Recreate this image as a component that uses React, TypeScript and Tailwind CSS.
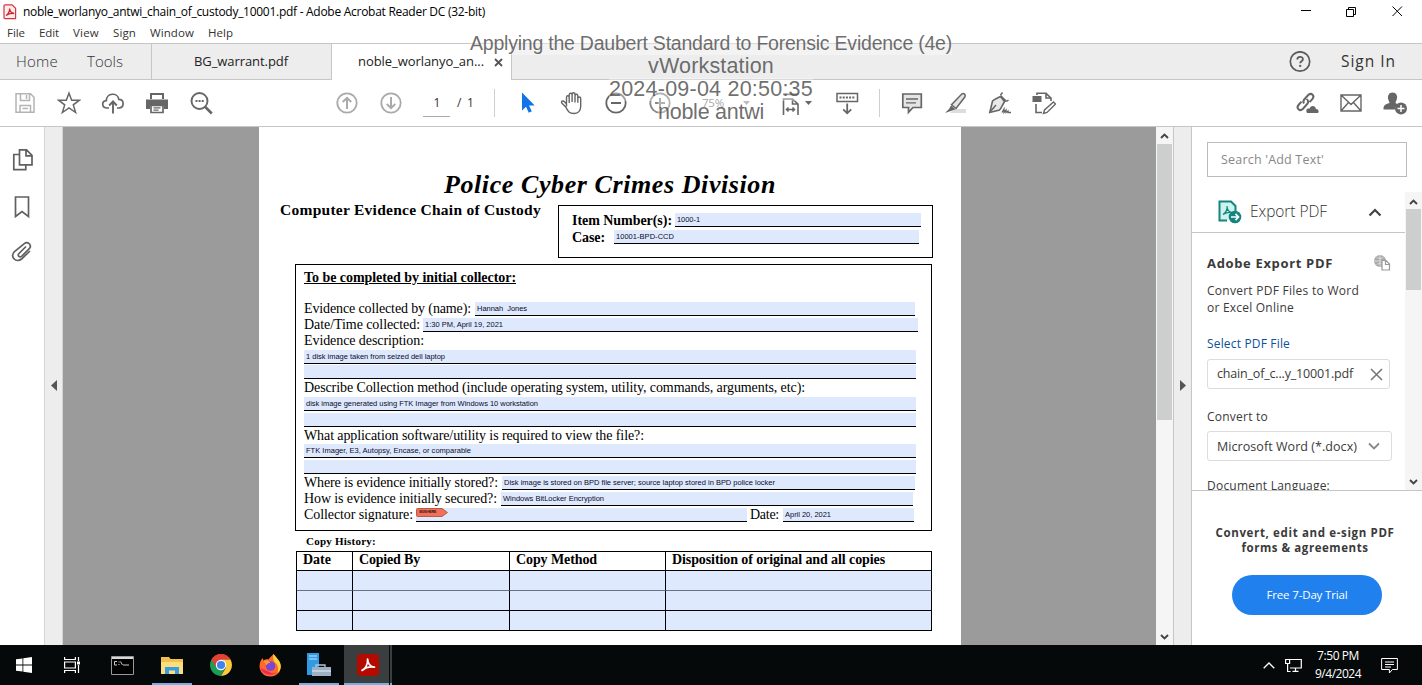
import { useLayoutEffect, useRef, type ReactNode } from "react";

const UI = "font-['Open_Sans','Noto_Sans',sans-serif]";
const SERIF = "font-['Liberation_Serif',serif]";
const SANS = "font-['Liberation_Sans',sans-serif]";

/** Single line of text whose tracking is adjusted so that it spans `w` pixels. */
function Fit({ w, className = "", children }: { w: number; className?: string; children: string }) {
  const ref = useRef<HTMLSpanElement>(null);
  useLayoutEffect(() => {
    const el = ref.current;
    if (!el) return;
    el.style.letterSpacing = "0px";
    const natural = el.getBoundingClientRect().width;
    el.style.letterSpacing = `${(w - natural) / children.length}px`;
  }, [w, children]);
  return (
    <span ref={ref} className={`inline-block shrink-0 whitespace-pre ${className}`}>
      {children}
    </span>
  );
}

function Icon({ children, size = 24, className = "text-[#666]" }: { children: ReactNode; size?: number; className?: string }) {
  return (
    <svg width={size} height={size} viewBox={`0 0 ${size} ${size}`} fill="none" stroke="currentColor" strokeWidth="1.8" className={`shrink-0 ${className}`}>
      {children}
    </svg>
  );
}

function Cell({ children, w = "w-11" }: { children: ReactNode; w?: string }) {
  return <div className={`flex h-full shrink-0 items-center justify-center ${w}`}>{children}</div>;
}

function TitleBar() {
  return (
    <div className={`flex h-6 shrink-0 items-center bg-white pl-[3px] text-[12px] text-black ${UI}`}>
      <svg width="14" height="16" viewBox="0 0 14 16" className="mr-[6px] shrink-0">
        <path d="M2 .8h7l3.6 3.4v10.400H2a1 1 0 0 1-1-1V1.800a1 1 0 0 1 1-1z" fill="#fdeceb" stroke="#d0383c" strokeWidth="1.200" />
        <path d="M3 11.500c2-1 4-4.500 3.600-7 .2 3 2.600 4.600 4.600 5C8.500 9 6 9.300 3 11.500z" fill="none" stroke="#c8262c" strokeWidth="1.300" />
      </svg>
      <Fit w={462}>noble_worlanyo_antwi_chain_of_custody_10001.pdf - Adobe Acrobat Reader DC (32-bit)</Fit>
      <svg width="110" height="20" viewBox="0 0 110 20" fill="none" stroke="#000" strokeWidth="1" className="mr-[14px] ml-auto shrink-0">
        <path d="M3 8.500h10" />
        <path d="M48.500 7.500h7v7h-7zM50.500 7.500v-2h7v7h-2" />
        <path d="M94.500 4.500l9.500 9.500M104 4.500l-9.500 9.500" />
      </svg>
    </div>
  );
}

function MenuBar() {
  return (
    <div className={`flex h-[19px] shrink-0 items-center gap-[14px] bg-white pb-[2px] pl-[7px] text-[11.500px] text-[#333] ${UI}`}>
      <Fit w={18}>File</Fit>
      <Fit w={20}>Edit</Fit>
      <Fit w={26}>View</Fit>
      <Fit w={23}>Sign</Fit>
      <Fit w={44}>Window</Fit>
      <Fit w={25}>Help</Fit>
    </div>
  );
}

function TabBar() {
  return (
    <div className={`flex h-[37px] shrink-0 border-y border-[#c6c6c6] bg-[#ededed] ${UI}`}>
      <div className="flex w-[152px] shrink-0 items-center border-r border-[#c6c6c6] pl-4 text-[15px] font-light text-[#333]">
        <Fit w={42}>Home</Fit>
        <Fit w={36} className="ml-[29px]">Tools</Fit>
      </div>
      <div className="flex w-[180px] shrink-0 items-center border-r border-[#c6c6c6] pl-[42px] text-[13px] text-[#222]">
        <Fit w={94}>BG_warrant.pdf</Fit>
      </div>
      <div className="-mt-px -mb-px flex w-[180px] shrink-0 items-center border-t border-r border-[#c6c6c6] bg-white pl-[26px] text-[13px] text-[#222]">
        <Fit w={126}>noble_worlanyo_an...</Fit>
        <svg width="9" height="9" viewBox="0 0 9 9" className="ml-[10px]" stroke="#555" strokeWidth="1.800">
          <path d="M1 1l7 7M8 1L1 8" />
        </svg>
      </div>
      <div className="ml-auto flex items-center pr-[26px] text-[15.500px] text-[#333]">
        <svg width="22" height="22" viewBox="0 0 22 22" fill="none" stroke="#5a5a5a" strokeWidth="1.700" className="mr-[30px]">
          <circle cx="11" cy="10.500" r="9.700" />
          <path d="M8.300 8.500c0-3.600 5.600-3.500 5.600-.3 0 2-2.700 2-2.700 4" strokeWidth="1.800" />
          <path d="M11.200 13.900v2" strokeWidth="2" />
        </svg>
        <Fit w={55}>Sign In</Fit>
      </div>
    </div>
  );
}

function Toolbar() {
  return (
    <div className={`flex h-[47px] shrink-0 items-center border-b border-[#c6c6c6] bg-white pl-[3px] ${UI}`}>
      <Cell>
        <Icon className="text-[#b4b4b4]">
          <path d="M3 2.800h14.500l3.500 3.500v15H3zM7.500 3v6.500h9V3M13.500 4v4M7 21v-6.500h10.500V21M9.500 17.500h5.500" strokeWidth="1.500" />
        </Icon>
      </Cell>
      <Cell>
        <Icon>
          <path d="M12 2.200l2.700 7h7.700l-6.100 4.700 2.300 7.600-6.600-4.500-6.600 4.500 2.300-7.600-6.100-4.700h7.700z" strokeWidth="1.500" />
        </Icon>
      </Cell>
      <Cell>
        <Icon>
          <path d="M8 17H5.500C.5 16.500.5 10 5.300 9.700 5.500 1.500 16.800 1.200 17.800 8.300c5.600 0 5.800 8.200.2 8.700h-2" strokeWidth="1.700" />
          <path d="M12 22.500V11M8.200 14.500l3.800-4 3.800 4" strokeWidth="1.900" />
        </Icon>
      </Cell>
      <Cell w="w-[43px]">
        <Icon>
          <path d="M1 8.500h22v9.500H19v-3H5v3H1z" fill="currentColor" stroke="none" />
          <path d="M6 8V3h12v5" strokeWidth="2" />
          <path d="M6 14.500h12v7H6z" fill="#fff" strokeWidth="1.700" />
          <path d="M8.500 16.800h7M8.500 19.200h5" strokeWidth="1.300" />
        </Icon>
      </Cell>
      <Cell w="w-[45px]">
        <Icon>
          <circle cx="10.500" cy="10" r="8" strokeWidth="1.900" />
          <path d="M16.300 16l6.500 6.500" strokeWidth="2.600" />
          <path d="M6.500 10h2M9.600 10h2M12.700 10h2" strokeWidth="1.800" />
        </Icon>
      </Cell>
      <div className="w-[102px] shrink-0" />
      <Cell>
        <Icon className="text-[#aaa]">
          <circle cx="12" cy="12" r="9.700" />
          <path d="M12 18V7M7.800 11L12 6.800l4.200 4.200" strokeWidth="2" />
        </Icon>
      </Cell>
      <Cell>
        <Icon className="text-[#aaa]">
          <circle cx="12" cy="12" r="9.700" />
          <path d="M12 6v11M7.800 13l4.200 4.200 4.200-4.200" strokeWidth="2" />
        </Icon>
      </Cell>
      <div className="ml-[10px] flex h-[27px] w-[27px] items-center justify-center border-b border-[#aaa] pl-px text-[12px] text-[#333]">1</div>
      <Fit w={18} className="ml-[7px] text-[12px] text-[#333]">/ 1</Fit>
      <div className="ml-[19px] h-7 w-px bg-[#cfcfcf]" />
      <div className="w-[11px] shrink-0" />
      <Cell>
        <Icon>
          <path d="M6 1.500v18l4-3.800 2.800 6 3-1.400-2.800-5.800h5.700z" fill="#1473e6" stroke="none" />
        </Icon>
      </Cell>
      <Cell>
        <Icon>
          <path d="M6.500 15.500V6.200c0-2 2.700-2 2.700 0V12M9.200 11V3.700c0-2 2.900-2 2.900 0V11M12.100 11V3.300c0-2 2.900-2 2.900 0V11.500M15 11V4.800c0-2 2.800-2 2.800 0v7M17.800 11V7.500c0-2 2.900-2 2.900 0v8c0 4.500-3 7-7 7-5 0-6-3-8-6.500l-3.700-3.700c-1.500-2 .8-3 2.500-1.600l2 2.300" strokeWidth="1.400" />
        </Icon>
      </Cell>
      <Cell>
        <Icon>
          <circle cx="12" cy="12" r="9.700" />
          <path d="M7 12h10" strokeWidth="2" />
        </Icon>
      </Cell>
      <Cell>
        <Icon className="text-[#888]">
          <circle cx="12" cy="12" r="9.700" />
          <path d="M7 12h10M12 7v10" strokeWidth="2" />
        </Icon>
      </Cell>
      <Fit w={22} className="ml-[20px] text-[11.500px] text-[#777]">75%</Fit>
      <svg width="8" height="5" viewBox="0 0 8 5" className="ml-[19px]" fill="#999"><path d="M0 0h7L3.500 4z" /></svg>
      <Icon className="ml-[28px] text-[#666]">
        <path d="M4 3.300h15" strokeWidth="1.800" />
        <path d="M4.500 24V8h9l5.500 5v11M13.500 8v5H19M8 18.500h7M9.500 16.500l-2 2 2 2M13.500 16.500l2 2-2 2" strokeWidth="1.600" />
      </Icon>
      <svg width="8" height="5" viewBox="0 0 8 5" className="ml-[2px]" fill="#666"><path d="M0 0h7L3.500 4z" /></svg>
      <div className="w-[12px] shrink-0" />
      <Cell>
        <Icon>
          <rect x="2" y="2.500" width="20.500" height="8" strokeWidth="1.500" />
          <path d="M4.500 6.500h15.500" strokeWidth="2" strokeDasharray="2 1.200" />
          <path d="M12.200 12.500v9.500M8.200 18.300l4 4 4-4" strokeWidth="1.800" />
        </Icon>
      </Cell>
      <div className="ml-[10px] h-7 w-px bg-[#cfcfcf]" />
      <div className="w-[10px] shrink-0" />
      <Cell>
        <Icon>
          <path d="M2.800 3h18.500v13.500H13l-4.500 4.800V16.500H2.800z" fill="#e4e4e4" strokeWidth="1.700" />
          <path d="M6 8h12M6 11.800h10" strokeWidth="1.300" />
        </Icon>
      </Cell>
      <Cell>
        <Icon>
          <path d="M10 18h12v4H6z" fill="#ddd" stroke="none" />
          <path d="M18 2.800c1.800-1 4 .8 3 3L12 17.500 7.500 13.800z" fill="#e4e4e4" strokeWidth="1.500" />
          <path d="M7 14.500l4.500 3.700-4 1.500L1 22l4-4z" fill="currentColor" stroke="none" />
        </Icon>
      </Cell>
      <Cell>
        <Icon>
          <path d="M12.500 4.500l6 6M12.500 5.500c-3 1.500-6.500 2.500-8 4.500L1.800 21.500 11.500 19c2-2 2.500-4.500 5-8.500z" fill="#e9e9e9" strokeWidth="1.600" />
          <path d="M12.500 4L14.500 1.500M18.500 10.500l2-1.500M2 21l6-7" strokeWidth="1.500" />
          <path d="M14 21.500l2-3.500v3.500l2-2.500v2.500l2-1.500v1.500h3" strokeWidth="1.300" />
        </Icon>
      </Cell>
      <Cell>
        <Icon>
          <path d="M.5 5h9v6h-9z" fill="currentColor" stroke="none" />
          <path d="M5 4V2.300h9L19 7v3M14 2.500V7h5M4 13v8.500h6" strokeWidth="1.600" />
          <path d="M21.500 11l2 2-8.500 8.500-3.500 1 1-3.500z" strokeWidth="1.400" />
        </Icon>
      </Cell>
      <div className="ml-auto flex h-full pr-[5px]">
        <Cell>
          <Icon>
            <g strokeWidth="2">
              <path d="M9 12.500c-1.500-2-.5-3.500 1-5l3.500-3.700c3-2.500 6.500 1 4 4l-3 3.300" />
              <path d="M11.500 8c2.500 1.500 2 4-.2 6l-3.500 4c-3 2.800-7-.8-4.300-4l3-3.300" />
            </g>
            <path d="M12 22c-2-4 1-5 2.500-4.200 1-4 6-3.500 6.500.2 3 0 3 3 2 4z" fill="currentColor" stroke="none" />
          </Icon>
        </Cell>
        <Cell>
          <Icon>
            <path d="M2 4h20v16H2zM2 4l10 9.500L22 4M2 20l7.500-8.500M22 20l-7.500-8.500" strokeWidth="1.400" />
          </Icon>
        </Cell>
        <Cell>
          <Icon>
            <path d="M9.500 1.500c4 0 5 3.500 4.500 6-.3 2-1.500 3-1.500 4.500l2.500 1.500c-2 1.500-3 3-3 5H.5c0-4.500 1.500-5 6-6.500 0-1.500-1.300-2.500-1.500-4.500-.3-3 1-6 4.500-6z" fill="currentColor" stroke="none" />
            <circle cx="18" cy="17.500" r="6" fill="currentColor" stroke="none" />
            <path d="M18 14v7M14.500 17.500h7" stroke="#fff" strokeWidth="1.500" />
          </Icon>
        </Cell>
      </div>
    </div>
  );
}

function LeftRail() {
  return (
    <>
      <div className="flex w-11 shrink-0 flex-col items-center gap-[23px] bg-white pt-[21px]">
        <Icon className="ml-[2px] text-[#606060]">
          <path d="M8.500 1.800h7l5.500 5.500v9.500H8.500zM15 2v5.800h6M8 6.500H2.800v15.200h12V17" strokeWidth="1.700" />
        </Icon>
        <Icon className="text-[#606060]">
          <path d="M5.500 2h13v19.500l-6.500-5-6.500 5z" strokeWidth="1.700" />
        </Icon>
        <Icon className="-mt-[2px] text-[#606060]">
          <path d="M16 6.500l-7 7c-2 2.500.8 4.500 2.800 2.700l7.500-7.500c3-3.500-1.500-8-5-5L4.500 11.500c-5 5.500 2 12 7 7.500l8.500-8" strokeWidth="1.700" />
        </Icon>
      </div>
      <div className="flex w-[19px] shrink-0 items-center justify-center border-x border-[#d4d4d4] bg-[#ededed] pb-[2px]">
        <svg width="6" height="11" viewBox="0 0 6 11" fill="#555"><path d="M6 0v11L0 5.500z" /></svg>
      </div>
    </>
  );
}

function Field({ w, text, tw, className = "" }: { w: string; text?: string; tw?: number; className?: string }) {
  return (
    <div className={`flex h-[14px] shrink-0 items-center border-b border-black bg-[#dfe9fd] pl-[2px] text-[7.500px] leading-[12px] text-[#0a0a28] ${SANS} ${w} ${className}`}>
      {text && tw ? <Fit w={tw}>{text}</Fit> : null}
    </div>
  );
}

function Row({ children, h = "h-4" }: { children: ReactNode; h?: string }) {
  return <div className={`flex shrink-0 items-end ${h}`}>{children}</div>;
}

function Label({ w, children }: { w: number; children: string }) {
  return <Fit w={w} className="text-[14px] leading-[14px]">{children}</Fit>;
}

const columns = [
  { name: "Date", w: 28 },
  { name: "Copied By", w: 61 },
  { name: "Copy Method", w: 81 },
  { name: "Disposition of original and all copies", w: 213 },
];

function Document() {
  return (
    <div className={`flex w-[702px] shrink-0 flex-col bg-white text-black ${SERIF}`}>
      <div className="mt-[42px] flex h-8 items-center pl-[185px] text-[26px] leading-8 font-bold italic">
        <Fit w={332}>Police Cyber Crimes Division</Fit>
      </div>
      <div className="mt-1 flex h-[53px] items-start pl-[21px]">
        <Fit w={261} className="-mt-[3px] text-[15.500px] leading-4 font-bold">Computer Evidence Chain of Custody</Fit>
        <div className="ml-[17px] h-[53px] w-[375px] border border-black pt-[5px] pl-[13px]">
          <div className="flex h-4 items-end">
            <Fit w={100} className="text-[14px] leading-3 font-bold">Item Number(s):</Fit>
            <Field w="w-[246px]" text="1000-1" tw={23} className="ml-[3px]" />
          </div>
          <div className="mt-px flex h-4 items-end">
            <Fit w={33} className="text-[14px] leading-3 font-bold">Case:</Fit>
            <Field w="w-[305px]" text="10001-BPD-CCD" tw={58} className="ml-[9px]" />
          </div>
        </div>
      </div>
      <div className="mt-[6px] ml-[36px] h-[267px] w-[637px] border border-black pl-2">
        <div className="flex h-[35px] pt-[4px]">
          <Fit w={212} className="h-[17px] text-[14px] leading-[17px] font-bold underline">To be completed by initial collector:</Fit>
        </div>
        <Row><Label w={167}>Evidence collected by (name):</Label><Field w="w-[440px]" text="Hannah  Jones" tw={50} className="ml-1" /></Row>
        <Row><Label w={116}>Date/Time collected:</Label><Field w="w-[495px]" text="1:30 PM, April 19, 2021" tw={78} className="ml-[3px]" /></Row>
        <Row><Label w={120}>Evidence description:</Label></Row>
        <Row><Field w="w-[612px]" text="1 disk image taken from seized dell laptop" tw={139} /></Row>
        <Row h="h-[15px]"><Field w="w-[612px]" /></Row>
        <Row><Label w={501}>Describe Collection method (include operating system, utility, commands, arguments, etc):</Label></Row>
        <Row><Field w="w-[612px]" text="disk image generated using FTK Imager from Windows 10 workstation" tw={232} /></Row>
        <Row><Field w="w-[612px]" /></Row>
        <Row><Label w={340}>What application software/utility is required to view the file?:</Label></Row>
        <Row h="h-[15px]"><Field w="w-[612px]" text="FTK Imager, E3, Autopsy, Encase, or comparable" tw={165} /></Row>
        <Row><Field w="w-[612px]" /></Row>
        <Row><Label w={194}>Where is evidence initially stored?:</Label><Field w="w-[413px]" text="Disk image is stored on BPD file server; source laptop stored in BPD police locker" tw={271} className="ml-1" /></Row>
        <Row><Label w={193}>How is evidence initially secured?:</Label><Field w="w-[412px]" text="Windows BitLocker Encryption" tw={101} className="ml-1" /></Row>
        <Row>
          <Label w={109}>Collector signature:</Label>
          <div className="ml-[3px] flex h-[14px] w-[331px] items-start border-b border-black bg-[#dfe9fd]">
            <div className="relative flex h-[9px] w-8 items-center">
              <svg width="32" height="9" viewBox="0 0 32 9" className="absolute inset-0"><path d="M1.500.5H26l5.500 4-5.500 4H1.500a1 1 0 0 1-1-1v-6a1 1 0 0 1 1-1z" fill="#f0705a" stroke="#c05848" /></svg>
              <span className={`relative pl-[3px] text-[3.500px] leading-[9px] font-bold text-[#301010] ${SANS}`}><Fit w={17}>SIGN HERE</Fit></span>
            </div>
          </div>
          <div className="w-[3px] shrink-0" />
          <Label w={29}>Date:</Label>
          <Field w="w-[131px]" text="April 20, 2021" tw={46} className="ml-1" />
        </Row>
      </div>
      <div className="mt-[4px] flex h-[13px] items-center pl-[47px] text-[11px] leading-[13px] font-bold">
        <Fit w={70}>Copy History:</Fit>
      </div>
      <div className="mt-[3px] ml-[37px] w-[636px] border-t border-l border-black">
        <div className="grid h-[19px] grid-cols-[56px_157px_156px_266px] text-[14px] leading-[15px] font-bold">
          {columns.map((c) => (
            <div key={c.name} className="flex border-r border-b border-black pl-[6px]">
              <Fit w={c.w}>{c.name}</Fit>
            </div>
          ))}
        </div>
        {[0, 1, 2].map((r) => (
          <div key={r} className="grid h-5 grid-cols-[56px_157px_156px_266px] bg-[#dfe9fd]">
            {columns.map((c) => (
              <div key={c.name} className={r === 0 ? "border-r border-b border-r-black border-b-[#6a7080]" : "border-r border-b border-black"} />
            ))}
          </div>
        ))}
      </div>
    </div>
  );
}

function Chevron({ up = false }: { up?: boolean }) {
  return (
    <svg width="9" height="6" viewBox="0 0 9 6" fill="none" stroke="#444" strokeWidth="1.900">
      <path d={up ? "M1 5l3.500-3.500L8 5" : "M1 1l3.500 3.500L8 1"} />
    </svg>
  );
}

function SidePanel() {
  return (
    <div className={`flex w-[231px] shrink-0 flex-col border-l border-[#c6c6c6] bg-white text-[#3a3a3a] ${UI}`}>
      <div className="mt-[15px] ml-[15px] flex h-[35px] w-[200px] shrink-0 items-center border border-[#bbb] pt-[2px] pl-[13px] text-[12.500px] text-[#888]">
        <Fit w={103}>Search 'Add Text'</Fit>
      </div>
      <div className="mt-[15px] flex h-[299px] shrink-0 border-b border-[#c6c6c6]">
        <div className="flex h-[298px] w-[213px] shrink-0 flex-col overflow-hidden">
          <div className="flex h-[41px] shrink-0 items-center border-b border-[#c6c6c6] pl-[26px]">
            <svg width="24" height="24" viewBox="0 0 24 24" fill="none" className="shrink-0">
              <path d="M2 1h11l5 5v14H2a1 1 0 0 1-1-1V2a1 1 0 0 1 1-1z" fill="#cdf3ee" />
              <path d="M9 20.500H1.500v-19H13L17.500 6v5" stroke="#14857e" strokeWidth="2" />
              <path d="M5 14.500c3-2 4.500-5.500 4-8.500 0 4 2 6 5 6.500-3-.5-6 0-9 2z" stroke="#14857e" strokeWidth="1.200" />
              <circle cx="17" cy="17" r="6.300" fill="#14857e" />
              <path d="M13 17h7M17.500 13.800l3 3.200-3 3.200" stroke="#fff" strokeWidth="1.700" />
            </svg>
            <Fit w={77} className="ml-[8px] text-[15.500px] font-light text-[#333]">Export PDF</Fit>
            <svg width="14" height="9" viewBox="0 0 14 9" fill="none" stroke="#444" strokeWidth="2.200" className="ml-[41px]"><path d="M1.500 7.500L7 2l5.500 5.500" /></svg>
          </div>
          <div className="mt-[21px] flex h-[18px] shrink-0 items-center pl-[15px] text-[13px] font-bold">
            <Fit w={126} className="pt-px">Adobe Export PDF</Fit>
            <svg width="18" height="18" viewBox="0 0 18 18" fill="none" stroke="#999" className="ml-[40px]">
              <circle cx="7" cy="7" r="6" fill="#aaa" stroke="none" />
              <path d="M1 7h12M7 1v12M3.500 3c2 2 5 2 7 0M3.500 11c2-2 5-2 7 0" stroke="#e6e6e6" strokeWidth=".8" />
              <path d="M9 6.500h4l3.500 3.500v6H9zM12.500 6.800v3.700h4" fill="#fff" strokeWidth="1.200" />
            </svg>
          </div>
          <div className="mt-[10px] flex shrink-0 flex-col pl-[15px] text-[12px] leading-[17px]">
            <Fit w={152} className="self-start">Convert PDF Files to Word</Fit>
            <Fit w={87} className="self-start">or Excel Online</Fit>
          </div>
          <div className="mt-[19px] flex h-[17px] shrink-0 items-center pl-[15px] text-[12px] text-[#0d4f9a]">
            <Fit w={83}>Select PDF File</Fit>
          </div>
          <div className="mt-[7px] ml-[15px] flex h-[30px] w-[183px] shrink-0 items-center rounded-[3px] border border-[#dcdcdc] pl-[9px] text-[12.500px]">
            <Fit w={136}>chain_of_c...y_10001.pdf</Fit>
            <svg width="13" height="13" viewBox="0 0 13 13" stroke="#777" strokeWidth="1.600" className="ml-[17px]"><path d="M1 1l11 11M12 1L1 12" /></svg>
          </div>
          <div className="mt-[19px] flex h-[17px] shrink-0 items-center pl-[15px] text-[12px]">
            <Fit w={61}>Convert to</Fit>
          </div>
          <div className="mt-[6px] ml-[15px] flex h-[30px] w-[185px] shrink-0 items-center rounded-[3px] border border-[#dcdcdc] pl-[9px] text-[12.500px]">
            <Fit w={140} className="pt-[2px]">Microsoft Word (*.docx)</Fit>
            <svg width="12" height="8" viewBox="0 0 12 8" fill="none" stroke="#888" strokeWidth="1.800" className="ml-[11px]"><path d="M1 1.500l5 5 5-5" /></svg>
          </div>
          <div className="mt-[16px] flex h-[17px] shrink-0 items-center pl-[15px] text-[12px]">
            <Fit w={123}>Document Language:</Fit>
          </div>
        </div>
        <div className="flex w-[17px] shrink-0 flex-col items-center bg-[#f5f5f5] pt-[7px] pb-[5px]">
          <Chevron up />
          <div className="mt-1 h-[81px] w-[15px] bg-[#cdcfce]" />
          <div className="mt-auto"><Chevron /></div>
        </div>
      </div>
      <div className="mt-[34px] flex flex-col items-center pr-[4px] text-[11.500px] leading-[15px] font-bold">
        <Fit w={179}>Convert, edit and e-sign PDF</Fit>
        <Fit w={127}>forms &amp; agreements</Fit>
      </div>
      <button className="mt-5 ml-10 flex h-10 w-[150px] shrink-0 items-center justify-center rounded-full bg-[#2080ee] text-[11.500px] text-white">
        <Fit w={81}>Free 7-Day Trial</Fit>
      </button>
    </div>
  );
}

function Taskbar() {
  return (
    <div className={`flex h-10 shrink-0 bg-[#050909] text-white ${UI}`}>
      <div className="flex w-12 shrink-0 items-center justify-center">
        <svg width="16" height="16" viewBox="0 0 16 16" fill="#fff"><path d="M0 2.300L6.500 1.400v6.200H0zM7.300 1.300L16 0v7.600H7.300zM0 8.400h6.500v6.200L0 13.700zM7.300 8.400H16V16l-8.700-1.300z" /></svg>
      </div>
      <div className="flex w-12 shrink-0 items-center justify-center">
        <svg width="16" height="16" viewBox="0 0 16 16" fill="none" stroke="#fff" strokeWidth="1.200"><path d="M.6 0v2.500h10.800V0M.6 5h10.800v6H.6zM.6 16v-2.500h10.800V16M14.500 0v4M14.500 8v8" /><path d="M13 4.500h3v3h-3z" fill="#fff" stroke="none" /></svg>
      </div>
      <div className="flex w-[52px] shrink-0 items-center justify-center">
        <svg width="23" height="19" viewBox="0 0 23 19"><path d="M.5.500h22v18H.5z" fill="#000" stroke="#999" /><path d="M1 1h21v2H1z" fill="#d8d8d8" /><path d="M6 5.500H3.500V9H6M8 5.500v1M8 8v1M9.500 5.500l2 3.500M12 9h6" fill="none" stroke="#ccc" strokeWidth="1" /></svg>
      </div>
      <div className="ml-[4px] flex w-10 shrink-0 items-center justify-center border-b-2 border-[#76b0e0] pt-[2px]">
        <svg width="22" height="19" viewBox="0 0 22 19"><path d="M0 1h8l1.500 2H22v15H0z" fill="#f2c04c" /><path d="M0 6h22v12H0z" fill="#fbdf7c" /><path d="M4 11h14v7h-4v-3.500H8V18H4z" fill="#3a9be0" /></svg>
      </div>
      <div className="ml-[9px] flex w-10 shrink-0 items-center justify-center">
        <svg width="22" height="22" viewBox="0 0 22 22">
          <path d="M11 11L1.500 5.500A11 11 0 0 1 20.500 5.500z" fill="#e04335" />
          <path d="M11 11L1.500 5.500A11 11 0 0 0 11 22l4.500-8.500z" fill="#1f9d55" />
          <path d="M11 5.500h9.500A11 11 0 0 1 11 22l4.800-8.300z" fill="#fcca3f" />
          <path d="M11 5.500h9.500A11 11 0 0 0 1.500 5.500L6.300 13.500z" fill="#e04335" />
          <circle cx="11" cy="11" r="5.200" fill="#fff" /><circle cx="11" cy="11" r="4.100" fill="#3f83ee" />
        </svg>
      </div>
      <div className="ml-[9px] flex w-10 shrink-0 items-center justify-center">
        <svg width="23" height="23" viewBox="0 0 22 23">
          <path d="M14 0c2 2 2.500 3.500 4.500 5.500C24 12 21 22 11.500 22.500 3 22.800-1 16 .3 10 .5 8 1.500 6 3 4l1 2.500C6 5 8 5 9 5.500 10.500 3 12 2.500 14 0z" fill="#ff6a2a" />
          <path d="M14 0c2 2 2.500 3.500 4.500 5.500C22.500 10 22 16 18 19c1.500-4 .5-8-2-10-1.500-1.500-3-4-2-9z" fill="#ffd23c" />
          <path d="M1 14c2 7 12 9 17 4-3 2-6 1.500-8 0z" fill="#f0295a" />
          <circle cx="11" cy="12" r="4.800" fill="#7b45d6" />
          <path d="M4 7c3-1 6 0 7 2-2-.2-3.500.5-4 2.500z" fill="#ff9a2e" />
        </svg>
      </div>
      <div className="ml-[9px] flex w-10 shrink-0 items-center justify-center border-b-2 border-[#76b0e0] pt-[2px]">
        <svg width="24" height="24" viewBox="0 0 24 24"><path d="M0 0h12v22H0z" fill="#2f9be4" /><path d="M2 3h8M2 6h8" stroke="#c8e8ff" strokeWidth="1.200" /><path d="M9 15v-3h9v3" fill="none" stroke="#b8c4d0" strokeWidth="1.300" /><path d="M5 14h19v9H5z" fill="#9db0c4" /><path d="M5 18h19" stroke="#e8f0f8" /></svg>
      </div>
      <div className="ml-[5px] flex w-[45px] shrink-0 items-center justify-center border-b-2 border-[#76b0e0] bg-[#3a3e3e] pt-[1px] pl-[3px]">
        <svg width="22" height="22" viewBox="0 0 22 22"><rect width="22" height="22" rx="4" fill="#b30b00" /><path d="M5 16.500c3-1 6-6 5.600-11.500.3 4.500 3 7.800 6.900 8.200-4-.7-9 .3-12.500 3.300z" fill="none" stroke="#fff" strokeWidth="1.700" strokeLinejoin="round" /></svg>
      </div>
      <div className="ml-px w-[2px] shrink-0 border-b-2 border-[#76b0e0] bg-[#3a3e3e]" />
      <div className="ml-auto flex items-center">
        <svg width="12" height="7" viewBox="0 0 12 7" fill="none" stroke="#fff" strokeWidth="1.300" className="mr-[10px]"><path d="M.7 6.300L6 1l5.300 5.300" /></svg>
        <svg width="17" height="16" viewBox="0 0 17 16" fill="none" stroke="#fff" strokeWidth="1.200" className="mr-[12px]"><path d="M5 2.500h11.300v8.500H5M10.500 11v3M7.500 14.400h6M.6 2.500h4v4h-4zM2.600 6.500v8h3" /></svg>
        <div className="flex w-[48px] flex-col items-center text-[12px] leading-[18px]">
          <Fit w={42}>7:50 PM</Fit>
          <Fit w={46}>9/4/2024</Fit>
        </div>
        <svg width="17" height="17" viewBox="0 0 17 17" fill="none" stroke="#fff" strokeWidth="1.200" className="mr-[24px] ml-[19px]"><path d="M.6 1.500h15.800v11h-5l-3 3.500v-3.500H.6zM4 5h9M4 7.500h9M4 10h6" strokeWidth="1" /></svg>
      </div>
    </div>
  );
}

function Watermark() {
  return (
    <div className={`pointer-events-none absolute top-[32px] left-[466px] flex w-[490px] flex-col items-center text-[19.500px] leading-[23px] text-[#484848]/80 ${SANS}`}>
      <Fit w={482} className="bg-white/35">Applying the Daubert Standard to Forensic Evidence (4e)</Fit>
      <Fit w={126} className="text-[21.500px]">vWorkstation</Fit>
      <Fit w={204} className="bg-white/35 text-[21.500px]">2024-09-04 20:50:35</Fit>
      <Fit w={106} className="bg-white/35 text-[21.500px]">noble antwi</Fit>
    </div>
  );
}

export default function App() {
  return (
    <div className="relative flex h-[685px] w-[1422px] flex-col overflow-hidden bg-white">
      <TitleBar />
      <MenuBar />
      <TabBar />
      <Toolbar />
      <div className="flex h-[518px] shrink-0 overflow-hidden">
        <LeftRail />
        <div className="flex w-[1093px] shrink-0 bg-[#9b9b9b] pl-[196px]">
          <Document />
        </div>
        <div className="flex w-[17px] shrink-0 flex-col items-center bg-[#f5f5f5] pt-[6px] pb-[5px]">
          <Chevron up />
          <div className="mt-[5px] h-[276px] w-[15px] bg-[#cdcfce]" />
          <div className="mt-auto"><Chevron /></div>
        </div>
        <div className="flex w-[18px] shrink-0 items-center justify-center border-l border-[#c6c6c6] bg-[#ededed] pb-[2px]">
          <svg width="6" height="11" viewBox="0 0 6 11" fill="#555"><path d="M0 0v11l6-5.500z" /></svg>
        </div>
        <SidePanel />
      </div>
      <Taskbar />
      <Watermark />
    </div>
  );
}
